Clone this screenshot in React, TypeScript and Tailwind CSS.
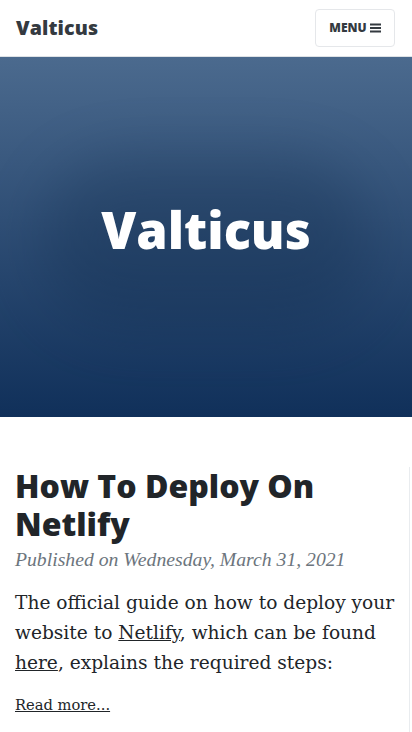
import React from "react";

export default function App() {
  return (
    <div className="w-[412px] min-h-[732px] bg-white overflow-hidden relative">
      <header className="h-[57px] flex items-center justify-between pl-4 pr-4 border-b border-[#dee2e6] bg-white">
        <span
          className="text-[19.6px] font-extrabold text-[#343a40] tracking-[0.1px]"
          style={{ fontFamily: '"Open Sans", sans-serif' }}
        >
          Valticus
        </span>
        <button
          className="h-[38px] w-[80px] mr-[1px] flex items-center justify-center gap-[3px] border border-[#e5e7ea] rounded-[4px] text-[12px] font-extrabold text-[#343a40] uppercase"
          style={{ fontFamily: '"Open Sans", sans-serif' }}
        >
          Menu
          <svg width="11" height="10" viewBox="0 0 11 10" className="mt-[-1px]">
            <rect x="0" y="0.5" width="11" height="2" fill="#343a40" />
            <rect x="0" y="4" width="11" height="2" fill="#343a40" />
            <rect x="0" y="7.5" width="11" height="2" fill="#343a40" />
          </svg>
        </button>
      </header>
      <section className="h-[360px] relative flex items-center justify-center bg-gradient-to-b from-[#4b6a8e] to-[#10305a] overflow-hidden">
        <div className="absolute left-[40px] top-[100px] w-[332px] h-[170px] rounded-full bg-[#0f2a4a] opacity-30 blur-[30px]" />
        <h1
          className="relative text-white text-[50.5px] font-extrabold leading-none mt-[-14px]"
          style={{ fontFamily: '"Open Sans", sans-serif' }}
        >
          Valticus
        </h1>
      </section>
      <main className="px-[15px] pt-[50px] relative">
        <div className="absolute right-[2px] top-[50px] w-px h-[400px] bg-[#e9ecef]" />
        <h2
          className="text-[32px] leading-[38px] font-extrabold text-[#212529]"
          style={{ fontFamily: '"Open Sans", sans-serif' }}
        >
          How To Deploy On Netlify
        </h2>
        <p
          className="italic text-[19.7px] leading-[26px] text-[#6c757d] mt-[3px]"
          style={{ fontFamily: '"Liberation Serif", serif' }}
        >
          Published on Wednesday, March 31, 2021
        </p>
        <p
          className="text-[18.6px] leading-[30px] text-[#212529] mt-[16px]"
          style={{ fontFamily: '"DejaVu Serif", serif' }}
        >
          The official guide on how to deploy your website to{" "}
          <a className="underline">Netlify</a>, which can be found{" "}
          <a className="underline">here</a>, explains the required steps:
        </p>
        <p
          className="text-[14.7px] leading-[26px] text-[#212529] mt-[14px]"
          style={{ fontFamily: '"DejaVu Serif", serif' }}
        >
          <a className="underline">Read more...</a>
        </p>
      </main>
    </div>
  );
}
